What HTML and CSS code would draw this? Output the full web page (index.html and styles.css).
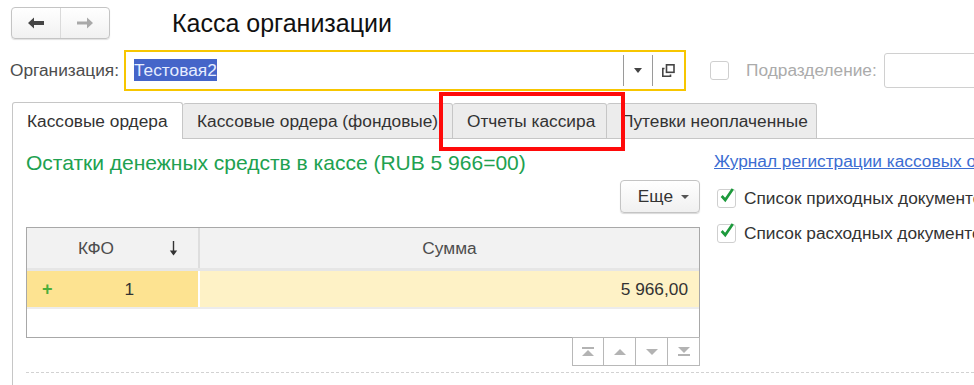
FILE: index.html
```html
<!DOCTYPE html>
<html lang="ru">
<head>
<meta charset="UTF-8" />
<title>Касса организации</title>
<link rel="stylesheet" href="styles.css">
</head>
<body>
  <div class="page">

    <!-- Top bar: history buttons and form title -->
    <header class="top">
      <div class="nav">
        <span class="nav-btn">
          <svg width="16" height="12" viewBox="0 0 16 12"><path d="M0 6 L6 0.5 L6 4 L16 4 L16 8 L6 8 L6 11.5 Z" fill="#454545"/></svg>
        </span>
        <span class="nav-btn">
          <svg width="16" height="12" viewBox="0 0 16 12"><path d="M16 6 L10 0.5 L10 4.5 L0 4.5 L0 7.5 L10 7.5 L10 11.5 Z" fill="#a9a9a9"/></svg>
        </span>
      </div>
      <h1 class="title">Касса организации</h1>
    </header>

    <!-- Organization selector -->
    <div class="org-row">
      <span class="org-label">Организация:</span>
      <div class="org-field">
        <span class="org-value"><span class="sel">Тестовая2</span></span>
        <span class="field-btn">
          <svg width="8" height="5" viewBox="0 0 8 5"><path d="M0 0 H8 L4 5 Z" fill="#444"/></svg>
        </span>
        <span class="field-btn">
          <svg width="13" height="13" viewBox="0 0 13 13" fill="none" stroke="#444" stroke-width="1.6"><rect x="4.5" y="0.8" width="7.5" height="7.5"/><path d="M2.5 4.5 H0.8 V12.2 H8.5 V10.5"/></svg>
        </span>
      </div>
      <span class="chk"></span>
      <span class="sub-label">Подразделение:</span>
      <div class="sub-field"></div>
    </div>

    <!-- Tabs -->
    <div class="tabs">
      <div class="tab active">Кассовые ордера</div>
      <div class="tab">Кассовые ордера (фондовые)</div>
      <div class="tab">Отчеты кассира</div>
      <div class="tab">Путевки неоплаченные</div>
      <div class="tabs-rest"></div>
    </div>

    <!-- Active tab page -->
    <div class="panel">
      <div class="cols">
        <div class="left">
          <h2 class="balance">Остатки денежных средств в кассе (RUB 5 966=00)</h2>
          <div class="cmd-bar">
            <span class="more">Еще <span class="caret"></span></span>
          </div>

          <div class="grid">
            <div class="grid-head">
              <div class="cell head-kfo">
                <span class="head-text">КФО</span>
                <svg class="sort" width="9" height="15" viewBox="0 0 9 15"><path d="M4.5 0 V13" stroke="#333" stroke-width="1.4"/><path d="M0.8 9.5 L4.5 14.5 L8.2 9.5 Z" fill="#333"/></svg>
              </div>
              <div class="cell head-sum">Сумма</div>
            </div>
            <div class="grid-row">
              <div class="cell kfo"><span class="plus">+</span><span class="kfo-num">1</span></div>
              <div class="cell sum">5 966,00</div>
            </div>
            <div class="grid-empty"></div>
          </div>

          <div class="pager">
            <span class="pg-btn">
              <svg width="12" height="9" viewBox="0 0 12 9" fill="#b3b3b3"><rect x="0" y="0" width="12" height="2"/><path d="M0 9 L6 3 L12 9 Z"/></svg>
            </span>
            <span class="pg-btn">
              <svg width="12" height="6" viewBox="0 0 12 6" fill="#b3b3b3"><path d="M0 6 L6 0 L12 6 Z"/></svg>
            </span>
            <span class="pg-btn">
              <svg width="12" height="6" viewBox="0 0 12 6" fill="#b3b3b3"><path d="M0 0 L6 6 L12 0 Z"/></svg>
            </span>
            <span class="pg-btn">
              <svg width="12" height="9" viewBox="0 0 12 9" fill="#b3b3b3"><path d="M0 0 L6 6 L12 0 Z"/><rect x="0" y="7" width="12" height="2"/></svg>
            </span>
          </div>
        </div>

        <div class="right">
          <a class="journal" href="#">Журнал регистрации кассовых ордеров</a>
          <div class="check-row">
            <span class="chk on">
              <svg width="18" height="18" viewBox="0 0 18 18"><path d="M3 9 L7 13.5 L15.5 1" fill="none" stroke="#1d9a3c" stroke-width="3"/></svg>
            </span>
            <span>Список приходных документов</span>
          </div>
          <div class="check-row">
            <span class="chk on">
              <svg width="18" height="18" viewBox="0 0 18 18"><path d="M3 9 L7 13.5 L15.5 1" fill="none" stroke="#1d9a3c" stroke-width="3"/></svg>
            </span>
            <span>Список расходных документов</span>
          </div>
        </div>
      </div>
      <div class="dashed"></div>
    </div>

    <!-- Red annotation frame drawn over the tab -->
    <div class="highlight"></div>
  </div>
</body>
</html>
```

FILE: styles.css
```css
/* Base */
body {
  margin: 0;
  font-family: 'Liberation Sans', Arial, sans-serif;
  font-size: 17.3px;
  color: #4d4d4d;
  background: #fff;
  overflow: hidden;
}

.page {
  position: relative;
  width: 974px;
  height: 385px;
  overflow: hidden;
  white-space: nowrap;
}

/* Top bar */
.top {
  display: flex;
  align-items: center;
  height: 50px;
  padding-left: 11px;
  box-sizing: border-box;
  padding-bottom: 4px;
}

.nav {
  display: flex;
  width: 99px;
  height: 32px;
  border: 1px solid #c4c4c4;
  border-radius: 4px;
  box-sizing: border-box;
  background: linear-gradient(#ffffff, #f1f1f1);
  box-shadow: 0 1px 1px rgba(0, 0, 0, 0.12);
}
.nav-btn {
  flex: 1;
  display: flex;
  align-items: center;
  justify-content: center;
}
.nav-btn + .nav-btn {
  border-left: 1px solid #dadada;
}

.title {
  margin: 0 0 0 62px;
  font-size: 25px;
  font-weight: normal;
  color: #111;
}

/* Organization row */
.org-row {
  display: flex;
  align-items: center;
  height: 41px;
  padding-left: 10px;
}
.org-row > * {
  flex: none;
}
.org-label {
  margin-right: 5px;
}
.org-field {
  display: flex;
  align-items: center;
  width: 562px;
  height: 41px;
  box-sizing: border-box;
  border: 2px solid #f7c600;
  padding: 4px 0;
}
.org-value {
  flex: 1;
  padding-left: 8px;
}
.sel {
  background: #4565c9;
  color: #e6edff;
  padding: 1px 0;
}
.field-btn {
  display: flex;
  align-items: center;
  justify-content: center;
  width: 28px;
  height: 31px;
  border-left: 1px solid #9a9a9a;
}
.field-btn:last-child {
  width: 31px;
}

.chk {
  display: inline-flex;
  align-items: center;
  justify-content: center;
  width: 19px;
  height: 19px;
  box-sizing: border-box;
  border: 1px solid #cfcfcf;
  border-radius: 3px;
  background: #fff;
  flex: none;
}
.org-row .chk {
  margin-left: 24px;
}
.sub-label {
  margin-left: 17px;
  color: #ababab;
}
.sub-field {
  margin-left: 7px;
  width: 120px;
  height: 33px;
  border: 1px solid #d0d0d0;
  border-radius: 3px;
}

/* Tabs */
.tabs {
  display: flex;
  align-items: flex-end;
  margin-top: 10px;
  padding-left: 12px;
  height: 38px;
}
.tab {
  flex: none;
  height: 36px;
  box-sizing: border-box;
  line-height: 34px;
  padding: 0 14px;
  background: #ececec;
  border: 1px solid #c6c6c6;
  border-left: none;
  border-radius: 3px 3px 0 0;
  color: #333;
}
.tab:nth-child(2) { width: 270px; }
.tab:nth-child(3) { width: 154px; text-align: center; }
.tab:nth-child(4) { width: 210px; }
.tab.active {
  width: 171px;
  height: 37px;
  background: #fff;
  border-left: 1px solid #c6c6c6;
  border-bottom: none;
  line-height: 36px;
}
.tabs-rest {
  flex: 1;
  border-bottom: 1px solid #c6c6c6;
}

/* Tab page */
.panel {
  margin-left: 12px;
  border-left: 1px solid #c6c6c6;
  padding-left: 13px;
  height: 260px;
}
.cols {
  display: flex;
}
.left {
  width: 674px;
  flex: none;
}
.right {
  margin-left: 14px;
  min-width: 0;
  padding-top: 12px;
  color: #333;
}

.balance {
  margin: 0;
  padding-top: 12px;
  font-size: 21px;
  line-height: 24px;
  font-weight: normal;
  color: #20a150;
}

.cmd-bar {
  display: flex;
  justify-content: flex-end;
  margin-top: 5px;
}
.more {
  display: flex;
  align-items: center;
  height: 33px;
  box-sizing: border-box;
  padding: 0 10px 0 17px;
  border: 1px solid #c4c4c4;
  border-radius: 4px;
  background: linear-gradient(#ffffff, #f0f0f0);
  box-shadow: 0 1px 1px rgba(0, 0, 0, 0.15);
  color: #333;
}
.caret {
  margin-left: 8px;
  width: 0;
  height: 0;
  border-left: 4px solid transparent;
  border-right: 4px solid transparent;
  border-top: 4px solid #555;
}

/* Table */
.grid {
  margin-top: 14px;
  border: 1px solid #a8a8a8;
  height: 111px;
  box-sizing: border-box;
}
.grid-head,
.grid-row {
  display: grid;
  grid-template-columns: 171px 1fr;
}
.grid-head {
  height: 40px;
  background: #f2f2f2;
  border-bottom: 3px solid #e6e6e6;
}
.grid-head .cell + .cell {
  border-left: 2px solid #dedede;
}
.cell {
  display: flex;
  align-items: center;
}
.head-text {
  flex: 1;
  text-align: center;
  padding-right: 4px;
}
.sort {
  margin-right: 20px;
}
.head-sum {
  justify-content: center;
}
.grid-row {
  height: 36px;
  border-bottom: 2px solid #ececec;
  color: #333;
}
.kfo {
  background: #fde391;
}
.plus {
  margin-left: 15px;
  color: #4cae3a;
  font-weight: bold;
  font-size: 18px;
}
.kfo-num {
  margin-left: 72px;
}
.sum {
  justify-content: flex-end;
  padding-right: 11px;
  background: #fef2c6;
  border-left: 2px solid #fff;
}

.pager {
  display: flex;
  justify-content: flex-end;
  margin-top: -1px;
}
.pg-btn {
  display: flex;
  align-items: center;
  justify-content: center;
  width: 32px;
  height: 29px;
  box-sizing: border-box;
  border: 1px solid #b8b8b8;
  border-left: none;
}
.pg-btn:first-child {
  border-left: 1px solid #b8b8b8;
}

/* Right column */
.journal {
  display: block;
  line-height: 20px;
  color: #3c6dd2;
  text-decoration: underline;
}
.check-row {
  display: flex;
  align-items: center;
  gap: 8px;
  height: 24px;
  margin-top: 11px;
  padding-left: 3px;
}
.check-row:first-of-type {
  margin-top: 15px;
}
.chk.on svg {
  margin-top: -4px;
  margin-left: 1px;
}

.dashed {
  margin-top: 6px;
  border-top: 1px dashed #d2d2d2;
  margin-right: -20px;
}

/* Red annotation frame */
.highlight {
  position: absolute;
  left: 439px;
  top: 92px;
  width: 186px;
  height: 59px;
  box-sizing: border-box;
  border: 4px solid #ff0a0a;
}
```
